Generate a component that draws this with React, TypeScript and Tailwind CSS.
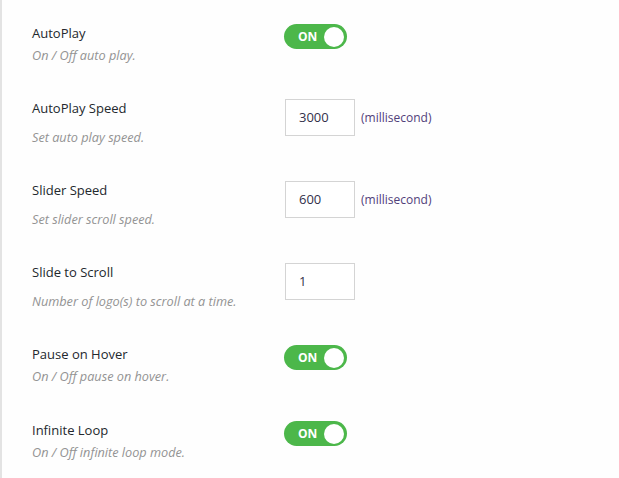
import React from 'react';

type Row =
  | { title: string; desc: string; kind: 'toggle' }
  | { title: string; desc: string; kind: 'input'; value: string; unit?: string };

const rows: Row[] = [
  { title: 'AutoPlay', desc: 'On / Off auto play.', kind: 'toggle' },
  { title: 'AutoPlay Speed', desc: 'Set auto play speed.', kind: 'input', value: '3000', unit: '(millisecond)' },
  { title: 'Slider Speed', desc: 'Set slider scroll speed.', kind: 'input', value: '600', unit: '(millisecond)' },
  { title: 'Slide to Scroll', desc: 'Number of logo(s) to scroll at a time.', kind: 'input', value: '1' },
  { title: 'Pause on Hover', desc: 'On / Off pause on hover.', kind: 'toggle' },
  { title: 'Infinite Loop', desc: 'On / Off infinite loop mode.', kind: 'toggle' },
];

function Toggle() {
  return (
    <div className="flex h-[25px] w-[63px] items-center justify-between rounded-full bg-[#4cb74a] pl-[14px] pr-[3px]">
      <span className="text-[12px] font-bold leading-none text-white">ON</span>
      <span className="h-[20px] w-[20px] rounded-full bg-white" />
    </div>
  );
}

export default function App() {
  return (
    <div
      className="min-h-[478px] w-full border-l-2 border-[#e3e3e3] bg-[#fefefe] pl-[30px] pt-[24px]"
      style={{ fontFamily: '"Open Sans", "Noto Sans", sans-serif' }}
    >
      <div className="flex flex-col gap-[35px]">
        {rows.map((row, i) => (
          <div key={row.title} className={`flex items-start ${i === 5 ? 'mt-px' : ''}`}>
            {/* label column */}
            <div className="w-[252px]">
              <div className="text-[13px] font-medium leading-[18px] text-[#23282d]">{row.title}</div>
              <div
                className={`text-[12.7px] italic leading-[18px] text-[#939393] ${
                  row.kind === 'input' ? 'mt-[11px]' : 'mt-[4px]'
                }`}
              >
                {row.desc}
              </div>
            </div>

            {/* control column */}
            {row.kind === 'toggle' ? (
              <Toggle />
            ) : (
              <div className="flex items-center">
                <div className="ml-px flex h-[37px] w-[70px] items-center border border-[#d4d4d4] bg-white px-[13px] text-[13px] text-[#33304a]">
                  {row.value}
                </div>
                {row.unit && <span className="ml-[6px] text-[12px] text-[#51407a]">{row.unit}</span>}
              </div>
            )}
          </div>
        ))}
      </div>
    </div>
  );
}
